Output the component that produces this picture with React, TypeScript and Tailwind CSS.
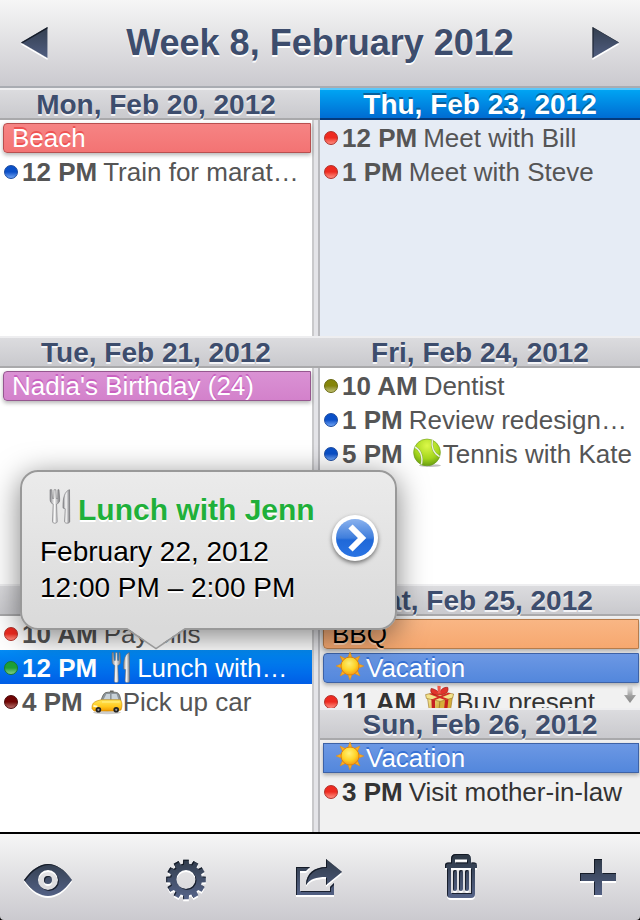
import React from "react";

type IconName = "lunch" | "taxi" | "tennis" | "sun" | "gift";

interface CalendarEvent {
  title: string;
  time?: string;
  icon?: IconName;
  color: string;
  selected?: boolean;
}

interface Day {
  label: string;
  kind?: "today" | "weekend";
  more?: boolean;
  events: CalendarEvent[];
}

const dots: Record<string, string> = {
  blue: "border-[#1a4aa0] from-[#0a50c8] from-50% to-[#6fa4f4] to-100%",
  red: "border-[#b03028] from-[#ee2a20] from-50% to-[#ff8a80] to-100%",
  olive: "border-[#66660c] from-[#85850a] from-50% to-[#c2c270] to-100%",
  green: "border-[#1c7a2c] from-[#1ea035] from-50% to-[#7ccf88] to-100%",
  maroon: "border-[#4a0808] from-[#700404] from-50% to-[#b86a6a] to-100%",
};

const bars: Record<string, string> = {
  red: "rounded-l border-[#b84f4f] from-[#f68484] to-[#f37373] text-white [text-shadow:0_-2px_0_#ee5252]",
  purple: "rounded-l border-[#95578f] from-[#da92d4] to-[#d381cb] text-white [text-shadow:0_-2px_0_#c961c0]",
  orange: "rounded-l border-[#b57c4c] from-[#f9b684] to-[#f6a86f] text-black [text-shadow:0_2px_0_#fcd0ae]",
  blue: "rounded-l border-[#3d62a6] from-[#6c98e4] to-[#5387dc] text-white [text-shadow:0_-2px_0_#3470d4]",
  blueContinued: "border-[#3d62a6] from-[#6c98e4] to-[#5387dc] text-white [text-shadow:0_-2px_0_#3470d4]",
};

const leftDays: Day[] = [
  {
    label: "Mon, Feb 20, 2012",
    events: [
      { title: "Beach", color: "red" },
      { title: "Train for marat…", time: "12 PM", color: "blue" },
    ],
  },
  {
    label: "Tue, Feb 21, 2012",
    events: [{ title: "Nadia's Birthday (24)", color: "purple" }],
  },
  {
    label: "Wed, Feb 22, 2012",
    events: [
      { title: "Pay bills", time: "10 AM", color: "red" },
      { title: "Lunch with…", time: "12 PM", icon: "lunch", color: "green", selected: true },
      { title: "Pick up car", time: "4 PM", icon: "taxi", color: "maroon" },
    ],
  },
];

const rightDays: Day[] = [
  {
    label: "Thu, Feb 23, 2012",
    kind: "today",
    events: [
      { title: "Meet with Bill", time: "12 PM", color: "red" },
      { title: "Meet with Steve", time: "1 PM", color: "red" },
    ],
  },
  {
    label: "Fri, Feb 24, 2012",
    events: [
      { title: "Dentist", time: "10 AM", color: "olive" },
      { title: "Review redesign…", time: "1 PM", color: "blue" },
      { title: "Tennis with Kate", time: "5 PM", icon: "tennis", color: "blue" },
    ],
  },
  {
    label: "Sat, Feb 25, 2012",
    kind: "weekend",
    more: true,
    events: [
      { title: "BBQ", color: "orange" },
      { title: "Vacation", icon: "sun", color: "blue" },
      { title: "Buy present", time: "11 AM", icon: "gift", color: "red" },
    ],
  },
  {
    label: "Sun, Feb 26, 2012",
    kind: "weekend",
    events: [
      { title: "Vacation", icon: "sun", color: "blueContinued" },
      { title: "Visit mother-in-law", time: "3 PM", color: "red" },
    ],
  },
];

// Gradients and the engraved look shared by every icon on the page
const SharedDefs = () => (
  <svg className="absolute" width="0" height="0" aria-hidden="true">
    <defs>
      <linearGradient id="steel" gradientUnits="userSpaceOnUse" x1="0" y1="4" x2="0" y2="46">
        <stop offset="0" stopColor="#2e3947" />
        <stop offset="1" stopColor="#56648a" />
      </linearGradient>
      <filter id="engrave" x="-20%" y="-20%" width="140%" height="150%" colorInterpolationFilters="sRGB">
        <feOffset in="SourceAlpha" dy="2" result="white" />
        <feFlood floodColor="#fff" />
        <feComposite in2="white" operator="in" result="light" />
        <feGaussianBlur in="SourceAlpha" stdDeviation="0.7" />
        <feOffset dx="0.5" dy="1.4" result="moved" />
        <feFlood floodColor="#0c121c" floodOpacity="0.8" />
        <feComposite in2="moved" operator="out" />
        <feComposite in2="SourceAlpha" operator="in" result="dark" />
        <feMerge>
          <feMergeNode in="light" />
          <feMergeNode in="SourceGraphic" />
          <feMergeNode in="dark" />
        </feMerge>
      </filter>
      <linearGradient id="silver" x1="0" y1="0" x2="1" y2="0">
        <stop offset="0" stopColor="#88888c" />
        <stop offset="0.45" stopColor="#fafafa" />
        <stop offset="1" stopColor="#7c7c80" />
      </linearGradient>
      <radialGradient id="sunFace" cx="0.45" cy="0.35" r="0.65">
        <stop offset="0" stopColor="#fff27a" />
        <stop offset="0.6" stopColor="#ffd428" />
        <stop offset="1" stopColor="#f59a12" />
      </radialGradient>
      <radialGradient id="ball" cx="0.5" cy="0.25" r="0.8">
        <stop offset="0" stopColor="#dcf84a" />
        <stop offset="0.6" stopColor="#a4d61c" />
        <stop offset="1" stopColor="#5f9410" />
      </radialGradient>
      <linearGradient id="cab" x1="0" y1="0" x2="0" y2="1">
        <stop offset="0" stopColor="#ffe95a" />
        <stop offset="0.6" stopColor="#ffc81e" />
        <stop offset="1" stopColor="#f39a00" />
      </linearGradient>
      <linearGradient id="gold" x1="0" y1="0" x2="1" y2="1">
        <stop offset="0" stopColor="#f9ee9c" />
        <stop offset="1" stopColor="#c89a20" />
      </linearGradient>
      <linearGradient id="disc" x1="0" y1="0" x2="0" y2="1">
        <stop offset="0" stopColor="#8ab2ee" />
        <stop offset="0.5" stopColor="#3f7edc" />
        <stop offset="0.55" stopColor="#1f68d8" />
        <stop offset="1" stopColor="#2a74e4" />
      </linearGradient>
      <linearGradient id="fade" x1="0" y1="0" x2="0" y2="1">
        <stop offset="0" stopColor="#aaa" stopOpacity="0.1" />
        <stop offset="0.6" stopColor="#9c9c9c" />
        <stop offset="1" stopColor="#8c8c8c" />
      </linearGradient>
    </defs>
  </svg>
);

const drawings: Record<IconName, React.ReactNode> = {
  lunch: (
    <>
      <path
        d="M9 1.5 L9 10 C9 12.6 10.2 13.8 11.8 14.4 L11.2 30 C11.2 32 15.4 32 15.4 30 L14.8 14.4 C16.6 13.8 17.8 12.6 17.6 10 L17 1.5 H16 L15.8 9.4 H14.6 L14.2 1.5 H12.6 L12.3 9.4 H11.2 L10.6 1.5 Z"
        fill="url(#silver)"
        stroke="#68686c"
        strokeWidth="0.5"
      />
      <path
        d="M26.4 1.5 C22.4 2.6 20.2 8.5 20.6 18 L22.6 18.6 L22 30 C22 32 26.6 32 26.6 30 Z"
        fill="url(#silver)"
        stroke="#68686c"
        strokeWidth="0.5"
      />
    </>
  ),
  taxi: (
    <>
      <ellipse cx="18" cy="27.6" rx="14" ry="1.6" fill="#000" opacity="0.2" />
      <path d="M21 5.6 L24.6 5.4 V8 H21 Z" fill="#6b6b66" />
      <path
        d="M12 15.6 C13.4 11 14.6 8.4 16.6 7.6 C20 6.8 26 6.8 28.6 7.8 C30.6 9 31.2 12 31.8 15.6 Z"
        fill="#8c949a"
        stroke="#5a5a50"
        strokeWidth="0.7"
      />
      <path d="M14.6 14.4 L17.4 9 H21 V14.4 Z M22.6 9 H27.6 L29.4 14.4 H22.6 Z" fill="#c9d2d8" />
      <path
        d="M3 23.6 C2.8 20.4 3.6 18.4 5.4 17.2 C7.6 15.8 10 15.2 12.4 14.8 H31.4 C32.8 16.4 33.2 19 32.8 22 L32 25 L28 26 H5 Z"
        fill="url(#cab)"
        stroke="#c98600"
        strokeWidth="0.6"
      />
      <path d="M4.4 20.8 L8.4 21.6" stroke="#fffbd0" strokeWidth="1.8" />
      <path d="M13 17 H30.6" stroke="#fff08a" strokeWidth="1" />
      <circle cx="9.4" cy="24.8" r="2.8" fill="#222" />
      <circle cx="9.4" cy="24.8" r="1.1" fill="#999" />
      <circle cx="27.2" cy="24.8" r="2.8" fill="#222" />
      <circle cx="27.2" cy="24.8" r="1.1" fill="#999" />
    </>
  ),
  tennis: (
    <>
      <ellipse cx="21" cy="28.6" rx="11" ry="1.4" fill="#000" opacity="0.25" />
      <circle cx="18" cy="15.4" r="13.4" fill="url(#ball)" stroke="#6c9c1c" strokeWidth="0.6" />
      <path d="M5.8 10 C11 12.4 14.2 19 12.4 27.4" fill="none" stroke="#7da834" strokeWidth="2.2" />
      <path d="M5.8 10 C11 12.4 14.2 19 12.4 27.4" fill="none" stroke="#eef4dc" strokeWidth="1.4" />
      <path d="M23.4 3.2 C22 10 24.6 16.6 30.6 19.6" fill="none" stroke="#7da834" strokeWidth="2.2" />
      <path d="M23.4 3.2 C22 10 24.6 16.6 30.6 19.6" fill="none" stroke="#eef4dc" strokeWidth="1.4" />
    </>
  ),
  sun: (
    <>
      {[0, 45, 90, 135, 180, 225, 270, 315].map((angle) => (
        <path
          key={angle}
          d="M15.6 7.4 L18 1 L20.4 7.4 Z"
          transform={`rotate(${angle} 18 15)`}
          fill="#ffae1c"
          stroke="#e08a10"
          strokeWidth="0.5"
        />
      ))}
      <circle cx="18" cy="15" r="9" fill="url(#sunFace)" stroke="#dc8414" strokeWidth="1" />
    </>
  ),
  gift: (
    <>
      <path d="M5.4 12 L18 15 L16.8 30 L7.4 26.4 Z" fill="url(#gold)" stroke="#98701c" strokeWidth="0.6" />
      <path d="M18 15 L30.4 12 L28.4 26.4 L16.8 30 Z" fill="#d6ae3a" stroke="#98701c" strokeWidth="0.6" />
      <path d="M3.6 9.6 L17 6.4 L31.6 9 L30.6 13 L18 16.4 L4.4 13.4 Z" fill="#f2e38c" stroke="#98701c" strokeWidth="0.6" />
      <path d="M9.4 14 L13 14.8 L13 28.6 L10 27.4 Z M23 15 L26.4 14 L25 27.6 L21.6 28.6 Z" fill="#c51f1f" />
      <path d="M7 9 L10 8.2 L26.4 14 L23 15 Z M26 7.8 L29 8.6 L13 15 L9.6 14.4 Z" fill="#d32a24" />
      <path
        d="M17 9.8 C10 10.4 7.6 7 9.2 3.4 C12 3.8 16 5.6 17.4 8.4 C18.4 4.6 21.6 1.8 25.8 2.4 C27 6.6 24 9.6 17.6 9.8 Z"
        fill="#e0342c"
        stroke="#901410"
        strokeWidth="0.6"
      />
      <path d="M15.4 0.8 L18.6 1 L18.6 8.6 L15.8 8.6 Z" fill="#f0564a" />
    </>
  ),
};

const EventIcon: React.FC<{ name: IconName; className: string }> = ({ name, className }) => (
  <svg className={`shrink-0 ${className}`} viewBox="0 0 34 34" role="img" aria-label={name}>
    {drawings[name]}
  </svg>
);

const EventPopover = () => (
  <div className="absolute bottom-[54px] left-5 z-10 flex items-start gap-4 rounded-[18px] border-2 border-[#999] bg-linear-to-b from-[#ebebeb] to-[#dadada] pt-3.5 pr-4 pb-[22px] pl-[18px] whitespace-nowrap text-black shadow-[0_6px_30px_rgba(0,0,0,0.5)] [text-shadow:0_2px_0_#fff]">
    <div>
      <h3 className="flex h-12 items-center text-[30px] font-bold text-[#1fb03a]">
        <EventIcon name="lunch" className="mb-1.5 size-[38px]" />
        Lunch with Jenn
      </h3>
      <p className="text-[28px] leading-9">February 22, 2012</p>
      <p className="text-[28px] leading-9">12:00 PM – 2:00 PM</p>
    </div>
    <button type="button" aria-label="Show event" className="mt-7 drop-shadow-[0_2px_2px_rgba(0,0,0,0.5)]">
      <svg className="size-12" viewBox="0 0 48 48" aria-hidden="true">
        <circle cx="24" cy="24" r="23" fill="#fff" />
        <circle cx="24" cy="24" r="19" fill="url(#disc)" />
        <path d="M19.5 12.5 L31 24 L19.5 35.5" fill="none" stroke="#fff" strokeWidth="6" />
      </svg>
    </button>
    <svg className="absolute top-full left-[105px] h-[22px] w-[58px]" viewBox="0 0 58 22" aria-hidden="true">
      <path d="M0 0 H58 L29 20 Z" fill="#dadada" />
      <path d="M0 1 L29 20.6 L58 1" fill="none" stroke="#999" strokeWidth="1.6" />
    </svg>
  </div>
);

const EventRow: React.FC<CalendarEvent> = (props) => {
  const { title, time, icon, color, selected } = props;

  if (!time) {
    return (
      <li className="h-[34px] pt-[3px] pr-px pl-[3px]">
        <div
          className={`flex h-[30px] items-center border bg-linear-to-b pl-2 shadow-[0_2px_4px_rgba(0,0,0,0.3)] ${bars[color]}`}
        >
          {icon && <EventIcon name={icon} className="size-[34px]" />}
          {title}
        </div>
      </li>
    );
  }

  return (
    <li
      className={`relative flex h-[34px] items-center pt-0.5 pl-1 ${
        selected ? "bg-linear-to-b from-[#058cf5] to-[#015de6] text-white" : ""
      }`}
    >
      <span className={`mr-1 size-3.5 shrink-0 rounded-full border bg-linear-to-b ${dots[color]}`} />
      <span className="mr-1.5 font-bold">{time}</span>
      {icon && <EventIcon name={icon} className="size-[34px]" />}
      <span>{title}</span>
      {selected && <EventPopover />}
    </li>
  );
};

const DaySection: React.FC<{ day: Day; left?: boolean; className: string }> = ({ day, left, className }) => {
  const today = day.kind === "today";
  const weekend = day.kind === "weekend";
  return (
    <section className={`flex min-h-0 flex-col ${className}`}>
      <h2
        className={`h-8 shrink-0 bg-linear-to-b text-center text-[28px] leading-[34px] font-bold whitespace-nowrap ${
          left ? "pr-2" : ""
        } ${
          today
            ? "from-[#03a8f5] to-[#0168d0] text-white shadow-[inset_0_2px_0_#5cc8fa,inset_0_-2px_0_#043a7c] [text-shadow:0_-2px_0_#07609c]"
            : "from-[#dddde0] to-[#c8c8cc] text-[#3d4d6d] shadow-[inset_0_2px_0_#eeeef0,inset_0_-2px_0_#a9a9ab] [text-shadow:0_2px_0_#f4f4f6]"
        }`}
      >
        {day.label}
      </h2>
      <div className="flex min-h-0 flex-1">
        <ul
          className={`relative min-w-0 flex-1 text-[26px] leading-8 whitespace-nowrap ${
            today ? "bg-[#e6ecf5]" : weekend ? "bg-[#f1f1f1]" : "bg-white"
          } ${weekend ? "text-[#333]" : "text-[#555]"} ${left ? "" : "overflow-hidden"}`}
        >
          {day.events.map((event) => (
            <EventRow key={event.title} {...event} />
          ))}
          {day.more && (
            <li className="absolute right-1 bottom-0.5" aria-label="More events">
              <svg className="h-5 w-3" viewBox="0 0 12 20" aria-hidden="true">
                <path d="M3.5 0 H8.5 V9 H12 L6 17 L0 9 H3.5 Z" fill="url(#fade)" />
              </svg>
            </li>
          )}
        </ul>
        {left && <div className="w-2 border-r-2 border-l-2 border-r-[#b9b9bd] border-l-[#c9c9cb] bg-[#e4e4e8]" />}
      </div>
    </section>
  );
};

// Outline of a toothed wheel, four points per tooth
const gearOutline = (cx: number, cy: number, teeth: number, inner: number, outer: number) => {
  const step = (Math.PI * 2) / teeth;
  const points: string[] = [];
  for (let i = 0; i < teeth; i++) {
    const middle = i * step - Math.PI / 2;
    const corners = [
      [inner, -0.19],
      [outer, -0.14],
      [outer, 0.14],
      [inner, 0.19],
    ];
    corners.forEach(([radius, offset]) => {
      const x = cx + radius * Math.cos(middle + offset);
      const y = cy + radius * Math.sin(middle + offset);
      points.push(`${x.toFixed(2)} ${y.toFixed(2)}`);
    });
  }
  return `M${points.join(" L")} Z`;
};

const toolbarItems = [
  {
    label: "View",
    drawing: (
      <path
        fillRule="evenodd"
        d="M0 27 C8 16 16 11 24 11 S40 16 48 27 C40 38 32 43 24 43 S8 38 0 27 Z M24 17 A10 10 0 1 0 24 37 A10 10 0 1 0 24 17 Z M24 23 A4 4 0 1 1 24 31 A4 4 0 1 1 24 23 Z"
      />
    ),
  },
  {
    label: "Settings",
    drawing: (
      <path
        fillRule="evenodd"
        d={`${gearOutline(24, 26.5, 12, 16, 20)} M24 17 A9.5 9.5 0 1 0 24 36 A9.5 9.5 0 1 0 24 17 Z`}
      />
    ),
  },
  {
    label: "Share",
    drawing: (
      <>
        <path d="M-3 14 H11 L7 18 H1 V38 H31 V34 L35 30 V42 H-3 Z" />
        <path d="M43 19 L27 6 V14 C16 14 7 20 7 32 C11 26 17 24 27 24 V32 Z" />
      </>
    ),
  },
  {
    label: "Delete",
    drawing: (
      <>
        <path
          fillRule="evenodd"
          d="M8 15 V12.5 Q8 9.5 11 9.5 H14 V6 Q14 1 19 1 H29 Q34 1 34 6 V9.5 H37 Q40 9.5 40 12.5 V15 H38 V41 Q38 45 34 45 H14 Q10 45 10 41 V15 Z M18 9.5 H30 V6.5 H18 Z M14 15 V40 H34 V15 Z"
        />
        <rect x="16" y="17" width="4" height="21" rx="2" />
        <rect x="22" y="17" width="4" height="21" rx="2" />
        <rect x="28" y="17" width="4" height="21" rx="2" />
      </>
    ),
  },
  { label: "Add", drawing: <path d="M20 6 H28 V20 H42 V28 H28 V42 H20 V28 H6 V20 H20 Z" /> },
];

export default function App() {
  return (
    <div className="flex h-screen flex-col bg-black font-['Liberation_Sans',sans-serif]">
      <SharedDefs />
      <header className="flex h-[88px] shrink-0 items-center justify-between border-b-2 border-[#a9acb2] bg-linear-to-b from-[#f6f6f6] to-[#cbcacf] px-5">
        <button type="button" aria-label="Previous week">
          <svg className="h-9 w-7" viewBox="0 7 28 36" aria-hidden="true">
            <path d="M1 24.5 L27.5 9 V40 Z" fill="url(#steel)" filter="url(#engrave)" />
          </svg>
        </button>
        <h1 className="text-4xl font-bold whitespace-nowrap text-[#3d4d6d] [text-shadow:0_2px_0_#fff]">
          Week 8, February 2012
        </h1>
        <button type="button" aria-label="Next week">
          <svg className="h-9 w-7" viewBox="0 7 28 36" aria-hidden="true">
            <path d="M27 24.5 L0.5 9 V40 Z" fill="url(#steel)" filter="url(#engrave)" />
          </svg>
        </button>
      </header>
      <main className="grid min-h-0 flex-1 grid-cols-2">
        <div className="flex min-h-0 flex-col">
          {leftDays.map((day) => (
            <DaySection key={day.label} day={day} left className="flex-1" />
          ))}
        </div>
        <div className="flex min-h-0 flex-col">
          {rightDays.map((day) => (
            <DaySection key={day.label} day={day} className={day.kind === "weekend" ? "flex-1" : "flex-2"} />
          ))}
        </div>
      </main>
      <footer className="mt-0.5 flex h-[86px] shrink-0 items-center justify-between rounded-b bg-linear-to-b from-[#f6f6f6] to-[#cbcacf] pr-[18px] pl-6">
        {toolbarItems.map((item) => (
          <button key={item.label} type="button" aria-label={item.label}>
            <svg className="size-12 overflow-visible" viewBox="0 0 48 48" fill="url(#steel)" aria-hidden="true">
              <g filter="url(#engrave)">{item.drawing}</g>
            </svg>
          </button>
        ))}
      </footer>
    </div>
  );
}
